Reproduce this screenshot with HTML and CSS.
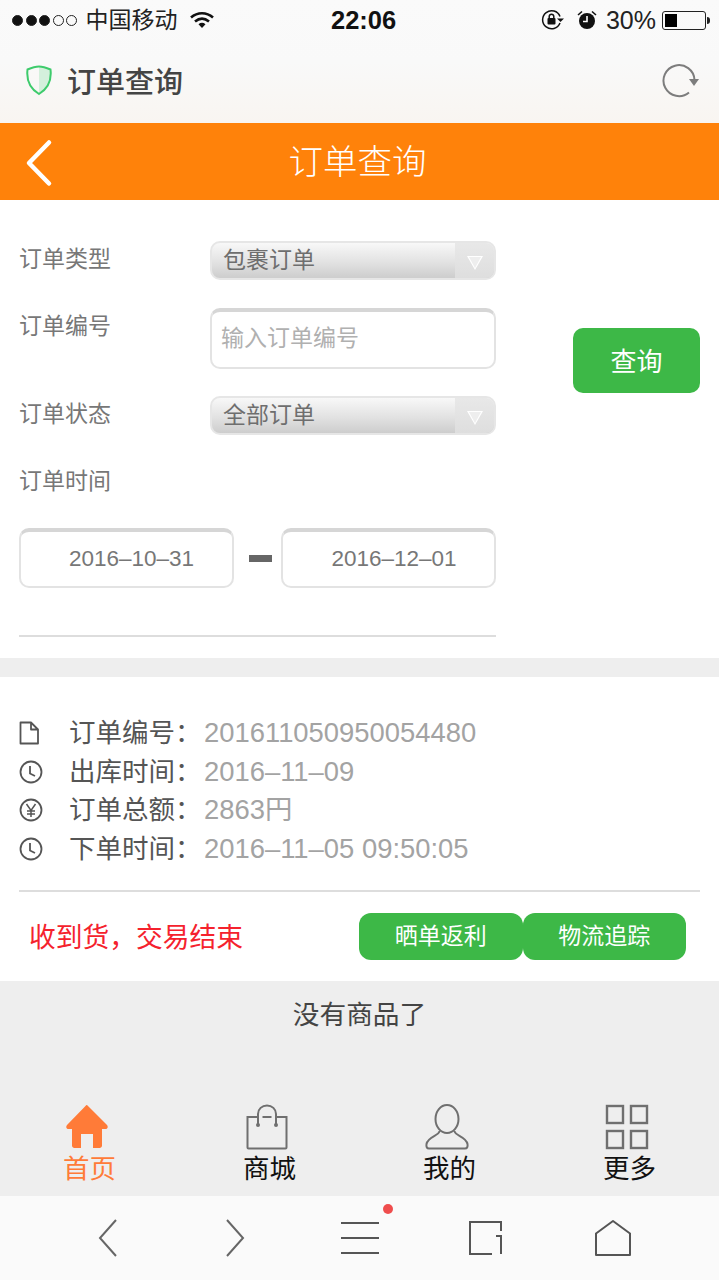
FILE: index.html
```html
<!DOCTYPE html>
<html lang="zh-CN">
<head>
  <meta charset="UTF-8">
  <title>订单查询</title>
  <link rel="stylesheet" href="styles.css">
</head>
<body>
  <div class="top-chrome">
    <div class="statusbar">
      <div class="status-left">
        <span class="dot on"></span><span class="dot on"></span><span class="dot on"></span><span class="dot"></span><span class="dot"></span>
        <span class="carrier">中国移动</span>
        <svg class="wifi" width="24" height="18" viewBox="0 0 24 18"><path d="M1 6.500C7.500 .8 16.500 .8 23 6.500" fill="none" stroke="#111" stroke-width="2.600"/><path d="M5 10.500C9.500 6.800 14.500 6.800 19 10.500" fill="none" stroke="#111" stroke-width="2.600"/><path d="M8.500 13.200C10.800 11.400 13.200 11.400 15.500 13.200L12 17Z" fill="#111"/></svg>
      </div>
      <div class="status-time">22:06</div>
      <div class="status-right">
        <svg class="lock" width="24" height="22" viewBox="0 0 24 22"><path d="M19 7.500A9 9 0 1 0 19 14" fill="none" stroke="#111" stroke-width="1.500"/><path d="M16 9.500h7l-3.500 3.500Z" fill="#111"/><rect x="6.500" y="9" width="8" height="6.500" rx="1" fill="#111"/><path d="M8.200 9V7.500a2.300 2.300 0 0 1 4.600 0V9" fill="none" stroke="#111" stroke-width="1.500"/></svg>
        <svg class="alarm" width="20" height="20" viewBox="0 0 20 20"><circle cx="10" cy="11" r="8" fill="#111"/><path d="M10 6v5.500H6" fill="none" stroke="#fff" stroke-width="1.600"/><path d="M1 5l4-3.500M19 5l-4-3.500" stroke="#111" stroke-width="1.600"/></svg>
        <span class="battery-num">30%</span>
        <div class="battery"><div class="battery-fill"></div></div>
        <div class="battery-tip"></div>
      </div>
    </div>
    <div class="addressbar">
      <div class="address-title">
        <svg width="28" height="32" viewBox="0 0 28 32"><path d="M14 2.500C18 2.500 22 4 25.500 5.500C26.500 14 24 24 14 30Z" fill="#d4f0dc"/><path d="M14 2.500C10 2.500 6 4 2.500 5.500C1.500 14 4 24 14 30C24 24 26.500 14 25.500 5.500C22 4 18 2.500 14 2.500Z" fill="none" stroke="#3ecb6c" stroke-width="2"/></svg>
        <span>订单查询</span>
      </div>
      <svg class="reload" width="40" height="36" viewBox="0 0 40 36"><path d="M31.500 17A15.500 15.500 0 1 0 26 29.500" fill="none" stroke="#7d7d7d" stroke-width="2" transform="translate(1 1)"/><path d="M27 17h10l-5 7Z" fill="#7d7d7d"/></svg>
    </div>
  </div>

  <header class="page-head">
    <svg class="back" width="30" height="48" viewBox="0 0 30 48"><path d="M25 3.500L5 24l20 20.500" fill="none" stroke="#fff" stroke-width="4.500" stroke-linecap="round" stroke-linejoin="round"/></svg>
    <h1>订单查询</h1>
  </header>

  <section class="query">
    <div class="query-form">
      <div class="row row-select">
        <label>订单类型</label>
        <div class="select"><span>包裹订单</span><i class="select-arrow"></i></div>
      </div>
      <div class="row row-input">
        <label>订单编号</label>
        <div class="input placeholder">输入订单编号</div>
      </div>
      <div class="row row-select row-status">
        <label>订单状态</label>
        <div class="select"><span>全部订单</span><i class="select-arrow"></i></div>
      </div>
      <div class="row row-time"><label>订单时间</label></div>
      <div class="dates">
        <div class="input date">2016–10–31</div>
        <div class="dash"></div>
        <div class="input date date-end">2016–12–01</div>
      </div>
      <div class="form-line"></div>
    </div>
    <button class="query-btn">查询</button>
  </section>

  <section class="order">
    <ul class="order-info">
      <li>
        <svg width="24" height="24" viewBox="0 0 24 24"><path d="M1.500 1.500h10.500l7 7v14H1.500ZM12 1.500v7h7" fill="none" stroke="#555" stroke-width="1.800" stroke-linejoin="round"/></svg>
        <div class="info-text"><span class="k">订单编号：</span><span class="v">201611050950054480</span></div>
      </li>
      <li>
        <svg width="24" height="24" viewBox="0 0 24 24"><circle cx="12" cy="12" r="10.500" fill="none" stroke="#555" stroke-width="1.800"/><path d="M11 6v7.500l5 2.500" fill="none" stroke="#555" stroke-width="1.800"/></svg>
        <div class="info-text"><span class="k">出库时间：</span><span class="v">2016–11–09</span></div>
      </li>
      <li>
        <svg width="24" height="24" viewBox="0 0 24 24"><circle cx="12" cy="12" r="10.500" fill="none" stroke="#555" stroke-width="1.800"/><path d="M7.500 6l4.500 6.500L16.500 6M12 12.500V19M8 13h8M8 16h8" fill="none" stroke="#555" stroke-width="1.500"/></svg>
        <div class="info-text"><span class="k">订单总额：</span><span class="v">2863円</span></div>
      </li>
      <li>
        <svg width="24" height="24" viewBox="0 0 24 24"><circle cx="12" cy="12" r="10.500" fill="none" stroke="#555" stroke-width="1.800"/><path d="M11 6v7.500l5 2.500" fill="none" stroke="#555" stroke-width="1.800"/></svg>
        <div class="info-text"><span class="k">下单时间：</span><span class="v">2016–11–05 09:50:05</span></div>
      </li>
    </ul>
    <div class="order-foot">
      <div class="order-state">收到货，交易结束</div>
      <div class="order-btns">
        <a class="green-btn">晒单返利</a>
        <a class="green-btn">物流追踪</a>
      </div>
    </div>
  </section>

  <section class="bottom">
    <div class="no-more">没有商品了</div>
    <nav class="tabs">
      <a class="tab active">
        <svg width="44" height="46" viewBox="0 0 44 46"><path d="M22 1L42 21c1.500 2 .5 4-1.500 4H37v16.500c0 1.500-1 2.500-2.500 2.500H28V30H16v14H9.500C8 44 7 43 7 41.500V25H3.500C1.500 25 .5 23 2 21L20 2.500C21 1 21.500 1 22 1Z" fill="#ff7b38"/></svg>
        <span>首页</span>
      </a>
      <a class="tab">
        <svg width="44" height="46" viewBox="0 0 44 46"><path d="M13 13H2.500v30.500c0 .5.500 1 1 1h37c.5 0 1-.5 1-1V13H31M17.500 13H26.500M13 20.500V10C13 5 17 1.500 22 1.500S31 5 31 10v10.500" fill="none" stroke="#6f6f6f" stroke-width="2"/><circle cx="13" cy="21" r="2" fill="#6f6f6f"/><circle cx="31" cy="21" r="2" fill="#6f6f6f"/></svg>
        <span>商城</span>
      </a>
      <a class="tab">
        <svg width="44" height="46" viewBox="0 0 44 46"><ellipse cx="22" cy="15" rx="11.500" ry="14" fill="none" stroke="#6f6f6f" stroke-width="2"/><path d="M14.500 27C14 32 3 32.500 1.500 40c-.5 3 .5 4.500 2.500 4.500h36c2 0 3-1.500 2.500-4.500C41 32.500 30 32 29.500 27" fill="none" stroke="#6f6f6f" stroke-width="2"/></svg>
        <span>我的</span>
      </a>
      <a class="tab">
        <svg width="44" height="46" viewBox="0 0 44 46"><g fill="none" stroke="#6f6f6f" stroke-width="2.400"><rect x="2" y="2" width="16" height="17"/><rect x="26" y="2" width="16" height="17"/><rect x="2" y="27" width="16" height="17"/><rect x="26" y="27" width="16" height="17"/></g></svg>
        <span>更多</span>
      </a>
    </nav>
  </section>

  <footer class="browser-bar">
    <svg width="20" height="40" viewBox="0 0 20 40"><path d="M18 2L2 20l16 18" fill="none" stroke="#666" stroke-width="2"/></svg>
    <svg width="20" height="40" viewBox="0 0 20 40"><path d="M2 2l16 18L2 38" fill="none" stroke="#666" stroke-width="2"/></svg>
    <div class="menu-btn">
      <svg width="38" height="34" viewBox="0 0 38 34"><path d="M0 2h38M0 17h38M0 32h38" stroke="#555" stroke-width="2"/></svg>
      <i class="badge"></i>
    </div>
    <svg class="tabs-icon" width="36" height="36" viewBox="0 0 36 36"><path d="M24 34H2V2h31v9M28 16h5v18" fill="none" stroke="#555" stroke-width="2"/></svg>
    <svg width="38" height="38" viewBox="0 0 38 38"><path d="M19 2L36 14.500V36H2V14.500Z" fill="none" stroke="#555" stroke-width="2" stroke-linejoin="round"/></svg>
  </footer>
</body>
</html>
```

FILE: styles.css
```css
* {
  box-sizing: border-box;
}

body {
  margin: 0;
  width: 719px;
  height: 1280px;
  overflow: hidden;
  background: #fff;
  font-family: "Liberation Sans", "Noto Sans CJK SC", sans-serif;
  color: #666;
}

.top-chrome {
  height: 123px;
  background: linear-gradient(#fafafa, #f9f9f9 50%, #f9f5f1);
}

.statusbar {
  height: 40px;
  display: flex;
  align-items: center;
  justify-content: space-between;
  padding: 0 9px 0 12px;
  color: #111;
  position: relative;
}

.status-left,
.status-right {
  display: flex;
  align-items: center;
}

.dot {
  width: 11px;
  height: 11px;
  margin-right: 2.500px;
  border-radius: 50%;
  border: 1px solid #222;
}

.dot.on {
  background: #111;
}

.carrier {
  font-size: 23px;
  margin: 0 12px 4px 6px;
  color: #222;
}

.status-time {
  position: absolute;
  left: 331px;
  font-size: 25.500px;
  font-weight: bold;
}

.lock {
  margin-right: 12px;
}

.alarm {
  margin-right: 9px;
}

.battery-num {
  font-size: 25px;
  margin-right: 6px;
  color: #222;
}

.battery {
  width: 44px;
  height: 19px;
  border: 1px solid #222;
  border-radius: 3px;
  padding: 2px;
}

.battery-fill {
  width: 12px;
  height: 100%;
  background: #000;
}

.battery-tip {
  width: 3px;
  height: 7px;
  margin-left: 1px;
  background: #222;
  border-radius: 0 3px 3px 0;
}

.addressbar {
  height: 83px;
  display: flex;
  align-items: center;
  justify-content: space-between;
  padding: 0 17px 4px 25px;
}

.address-title {
  display: flex;
  align-items: center;
  gap: 14px;
  font-size: 29px;
  font-weight: 500;
  color: #444;
}

.page-head {
  height: 77px;
  background: #ff820a;
  position: relative;
  display: flex;
  align-items: center;
  justify-content: center;
}

.page-head h1 {
  margin: 0 4px 6px 0;
  font-size: 34.500px;
  font-weight: 300;
  color: #fff;
}

.back {
  position: absolute;
  left: 24px;
  top: 16px;
}

.query {
  height: 458px;
  padding: 41px 19px 0;
  display: flex;
  justify-content: space-between;
}

.query-form {
  width: 477px;
}

.row {
  display: flex;
  font-size: 23px;
  color: #777;
}

.row label {
  width: 191px;
  flex-shrink: 0;
  line-height: 36px;
}

.row-select {
  height: 39px;
}

.row-input {
  margin-top: 28px;
  height: 60px;
}

.row-status {
  margin-top: 28px;
}

.row-time {
  margin-top: 28px;
  height: 36px;
}

.select {
  width: 286px;
  height: 39px;
  display: flex;
  justify-content: space-between;
  border: 2px solid #e6e6e6;
  border-radius: 10px;
  background: linear-gradient(#f8f8f8, #e2e2e2 55%, #cdcdcd);
  overflow: hidden;
}

.select span {
  font-size: 23px;
  line-height: 34px;
  padding-left: 11px;
  color: #6e6e6e;
}

.select-arrow {
  width: 39px;
  background: linear-gradient(#e8e8e8, #dedede);
  position: relative;
}

.select-arrow::before,
.select-arrow::after {
  content: "";
  position: absolute;
}

.select-arrow::before {
  left: 12px;
  top: 13px;
  border-left: 8px solid transparent;
  border-right: 8px solid transparent;
  border-top: 14px solid #fff;
}

.select-arrow::after {
  left: 14px;
  top: 14px;
  border-left: 6px solid transparent;
  border-right: 6px solid transparent;
  border-top: 11px solid #eee;
}

.input {
  border: 2px solid #e3e3e3;
  border-top: 4px solid #d6d6d6;
  border-radius: 10px;
  background: #fff;
}

.placeholder {
  width: 286px;
  height: 61px;
  font-size: 23px;
  line-height: 52px;
  padding-left: 9px;
  color: #b0b0b0;
}

.dates {
  display: flex;
  align-items: center;
  margin-top: 29px;
}

.date {
  width: 215px;
  height: 60px;
  padding-left: 48px;
  font-size: 22.500px;
  line-height: 54px;
  color: #777;
}

.date-end {
  padding-left: 48px;
}

.dash {
  width: 24px;
  height: 7px;
  margin: 0 9px 0 15px;
  background: #666;
}

.form-line {
  height: 2px;
  margin-top: 47px;
  background: #ddd;
}

.query-btn {
  width: 127px;
  height: 65px;
  margin-top: 87px;
  padding-bottom: 4px;
  border: 0;
  border-radius: 10px;
  background: #3db847;
  color: #fff;
  font-family: inherit;
  font-size: 26px;
}

.order {
  border-top: 19px solid #eee;
  height: 323px;
  padding: 37px 19px 0;
}

.order-info {
  list-style: none;
  margin: 0;
  padding: 0 0 22px;
  border-bottom: 2px solid #ddd;
}

.order-info li {
  display: flex;
  align-items: center;
  height: 38.500px;
}

.order-info svg {
  flex-shrink: 0;
  margin-right: 26px;
}

.info-text {
  line-height: 38px;
  white-space: nowrap;
  font-size: 27.400px;
}

.k {
  display: inline-block;
  width: 135px;
  color: #555;
  font-size: 26.500px;
}

.v {
  color: #a3a3a3;
}

.order-foot {
  display: flex;
  align-items: center;
  justify-content: space-between;
  height: 88px;
  padding: 0 14px 0 10px;
}

.order-state {
  margin-bottom: 2px;
  font-size: 26.750px;
  color: #f5222d;
}

.order-btns {
  display: flex;
}

.green-btn {
  width: 163.500px;
  height: 47px;
  border-radius: 12px;
  background: #3db847;
  color: #fff;
  font-size: 23px;
  line-height: 46px;
  text-align: center;
}

.bottom {
  height: 215px;
  background: #eee;
  overflow: hidden;
}

.no-more {
  margin-top: 16px;
  text-align: center;
  font-size: 26.700px;
  line-height: 36px;
  color: #444;
}

.tabs {
  display: grid;
  grid-template-columns: repeat(4, 180px);
  margin: 71px 0 0 -3px;
}

.tab {
  display: flex;
  flex-direction: column;
  align-items: center;
  font-size: 26.500px;
  line-height: 34px;
  color: #111;
}

.tab svg {
  display: block;
}

.tab span {
  margin-top: 2px;
  padding-left: 5px;
}

.tab.active {
  color: #ff7b38;
}

.browser-bar {
  height: 84px;
  background: #fafafa;
  display: grid;
  grid-template-columns: 127px 127px 125px 127px 125px;
  justify-items: center;
  align-items: center;
  padding: 0 44px;
}

.menu-btn {
  position: relative;
  display: flex;
  margin-right: 2px;
}

.tabs-icon {
  margin-right: 2px;
}

.badge {
  position: absolute;
  right: -14px;
  top: -17px;
  width: 10px;
  height: 10px;
  border-radius: 50%;
  background: #ef4d4d;
}
```
